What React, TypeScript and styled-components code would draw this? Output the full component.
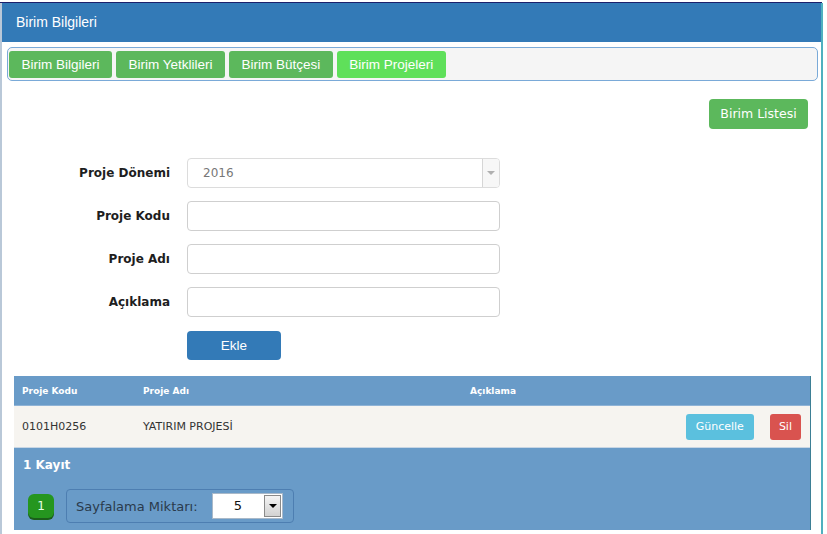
import React from "react";
import styled, { createGlobalStyle } from "styled-components";

const GlobalStyle = createGlobalStyle`
  html, body { margin: 0; padding: 0; background: #fff; }
  * { box-sizing: border-box; }
`;

const Page = styled.div`
  width: 827px;
  height: 534px;
  overflow: hidden;
  padding-top: 2px;
  background: #fff;
`;

const TopRule = styled.div`
  width: 822px;
  height: 1px;
  background: #1b1f6b;
`;

const Panel = styled.div`
  width: 823px;
  height: 531px;
  border-left: 2px solid #b9c8d8;
  border-right: 2px solid #4fb0bf;
  display: flex;
  flex-direction: column;
`;

const Heading = styled.div`
  height: 39px;
  background: #337ab7;
  color: #fff;
  font-family: "Liberation Sans", Arial, sans-serif;
  font-size: 14px;
  line-height: 39px;
  padding-left: 14px;
`;

const Body = styled.div`
  flex: 1;
  padding: 5px 3px 0 5px;
  display: flex;
  flex-direction: column;
`;

const TabBar = styled.div`
  height: 34px;
  border: 1px solid #7aaad8;
  border-radius: 5px;
  background: #f5f5f5;
  padding: 3px 1px;
  display: flex;
  gap: 4px;
`;

const Tab = styled.div<{ $active?: boolean }>`
  height: 27px;
  padding: 0 12.5px;
  border-radius: 3px;
  background: ${(p) => (p.$active ? "#5fe05a" : "#5cb85c")};
  color: #fff;
  font-family: "Liberation Sans", Arial, sans-serif;
  font-size: 13.5px;
  line-height: 27px;
  white-space: nowrap;
`;

const ActionRow = styled.div`
  display: flex;
  justify-content: flex-end;
  padding-right: 10px;
  margin-top: 18px;
`;

const ListButton = styled.div`
  width: 99px;
  height: 30px;
  border-radius: 4px;
  background: #5cb85c;
  color: #fff;
  font-family: "DejaVu Sans", Verdana, sans-serif;
  font-size: 12.5px;
  line-height: 30px;
  text-align: center;
`;

const Form = styled.div`
  margin-top: 29px;
  display: grid;
  grid-template-columns: 163px 313px;
  column-gap: 17px;
  row-gap: 13px;
  align-items: center;
`;

const Label = styled.div`
  text-align: right;
  font-family: "DejaVu Sans", Verdana, sans-serif;
  font-weight: bold;
  font-size: 12px;
  color: #1e1e1e;
`;

const Input = styled.div`
  height: 30px;
  border: 1px solid #cfcfcf;
  border-radius: 4px;
  background: #fff;
`;

const Select = styled.div`
  height: 30px;
  border: 1px solid #dcdcdc;
  border-radius: 4px;
  background: #fff;
  display: flex;
  align-items: center;
  overflow: hidden;
`;

const SelectValue = styled.div`
  flex: 1;
  padding-left: 15px;
  font-family: "DejaVu Sans", Verdana, sans-serif;
  font-size: 12px;
  color: #777;
`;

const SelectArrow = styled.div`
  width: 17px;
  align-self: stretch;
  border-left: 1px solid #d6d6d6;
  background: #f7f7f7;
  display: flex;
  align-items: center;
  justify-content: center;
  &::after {
    content: "";
    border-left: 4px solid transparent;
    border-right: 4px solid transparent;
    border-top: 4px solid #b0b0b0;
  }
`;

const AddButton = styled.div`
  margin-top: 1px;
  width: 94px;
  height: 29px;
  border-radius: 4px;
  background: #337ab7;
  color: #fff;
  font-family: "Liberation Sans", Arial, sans-serif;
  font-size: 13.5px;
  line-height: 29px;
  text-align: center;
`;

const Table = styled.div`
  margin: 16px 0 0 7px;
  width: 797px;
  display: flex;
  flex-direction: column;
  border-right: 1px solid #3d7f95;
`;

const Cols = styled.div`
  display: grid;
  grid-template-columns: 121px 327px 1fr auto;
  align-items: center;
  padding: 0 9px 0 8px;
`;

const HeadRow = styled(Cols)`
  height: 30px;
  background: #699bc8;
  color: #fff;
  font-family: "DejaVu Sans", Verdana, sans-serif;
  font-weight: bold;
  font-size: 9px;
  border-bottom: 1px solid #8fb3d6;
`;

const DataRow = styled(Cols)`
  height: 42px;
  background: #f6f4f0;
  color: #333;
  font-family: "DejaVu Sans", Verdana, sans-serif;
  font-size: 11px;
  border-bottom: 1px solid #c8d6e4;
`;

const RowActions = styled.div`
  display: flex;
  gap: 16px;
`;

const SmallButton = styled.div<{ $tone: "info" | "danger" }>`
  height: 26px;
  padding: 0 ${(p) => (p.$tone === "info" ? "10px" : "9px")};
  border-radius: 3px;
  background: ${(p) => (p.$tone === "info" ? "#5bc0de" : "#d9534f")};
  color: #fff;
  font-family: "DejaVu Sans", Verdana, sans-serif;
  font-size: 11px;
  line-height: 26px;
`;

const Footer = styled.div`
  height: 82px;
  background: #699bc8;
  padding: 10px 9px;
`;

const Count = styled.div`
  color: #fff;
  font-family: "DejaVu Sans", Verdana, sans-serif;
  font-weight: bold;
  font-size: 12px;
  line-height: 15px;
`;

const Pager = styled.div`
  margin-top: 16px;
  display: flex;
  align-items: center;
`;

const PageButton = styled.div`
  margin-left: 5px;
  width: 26px;
  height: 24px;
  border-radius: 6px;
  background: #25961f;
  box-shadow: 0 2px 0 #1b5e1a;
  color: #e8ffe8;
  font-family: "DejaVu Sans", Verdana, sans-serif;
  font-size: 12px;
  line-height: 24px;
  text-align: center;
`;

const PageSizeBox = styled.div`
  margin-left: 12px;
  width: 228px;
  height: 34px;
  border: 1px solid #4d7eb1;
  border-radius: 4px;
  display: flex;
  align-items: center;
  padding: 0 10px 0 9px;
  justify-content: space-between;
`;

const PageSizeLabel = styled.div`
  color: #2a3a4c;
  font-family: "DejaVu Sans", Verdana, sans-serif;
  font-size: 13px;
`;

const ClassicSelect = styled.div`
  width: 71px;
  height: 26px;
  background: #fff;
  border: 1px solid #a9b9c9;
  display: flex;
`;

const ClassicValue = styled.div`
  flex: 1;
  text-align: center;
  font-family: "DejaVu Sans", Verdana, sans-serif;
  font-size: 13px;
  line-height: 24px;
  color: #111;
`;

const ClassicArrow = styled.div`
  width: 17px;
  margin: 1px;
  border: 1px solid #8a8a8a;
  background: linear-gradient(#f4f4f4, #d2d2d2);
  display: flex;
  align-items: center;
  justify-content: center;
  &::after {
    content: "";
    border-left: 4px solid transparent;
    border-right: 4px solid transparent;
    border-top: 4px solid #000;
  }
`;

export default function App() {
  return (
    <Page>
      <GlobalStyle />
      <TopRule />
      <Panel>
        <Heading>Birim Bilgileri</Heading>
        <Body>
          <TabBar>
            <Tab>Birim Bilgileri</Tab>
            <Tab>Birim Yetklileri</Tab>
            <Tab>Birim Bütçesi</Tab>
            <Tab $active>Birim Projeleri</Tab>
          </TabBar>
          <ActionRow>
            <ListButton>Birim Listesi</ListButton>
          </ActionRow>
          <Form>
            <Label>Proje Dönemi</Label>
            <Select>
              <SelectValue>2016</SelectValue>
              <SelectArrow />
            </Select>
            <Label>Proje Kodu</Label>
            <Input />
            <Label>Proje Adı</Label>
            <Input />
            <Label>Açıklama</Label>
            <Input />
            <div />
            <AddButton>Ekle</AddButton>
          </Form>
          <Table>
            <HeadRow>
              <div>Proje Kodu</div>
              <div>Proje Adı</div>
              <div>Açıklama</div>
              <div />
            </HeadRow>
            <DataRow>
              <div>0101H0256</div>
              <div>YATIRIM PROJESİ</div>
              <div />
              <RowActions>
                <SmallButton $tone="info">Güncelle</SmallButton>
                <SmallButton $tone="danger">Sil</SmallButton>
              </RowActions>
            </DataRow>
            <Footer>
              <Count>1 Kayıt</Count>
              <Pager>
                <PageButton>1</PageButton>
                <PageSizeBox>
                  <PageSizeLabel>Sayfalama Miktarı:</PageSizeLabel>
                  <ClassicSelect>
                    <ClassicValue>5</ClassicValue>
                    <ClassicArrow />
                  </ClassicSelect>
                </PageSizeBox>
              </Pager>
            </Footer>
          </Table>
        </Body>
      </Panel>
    </Page>
  );
}
